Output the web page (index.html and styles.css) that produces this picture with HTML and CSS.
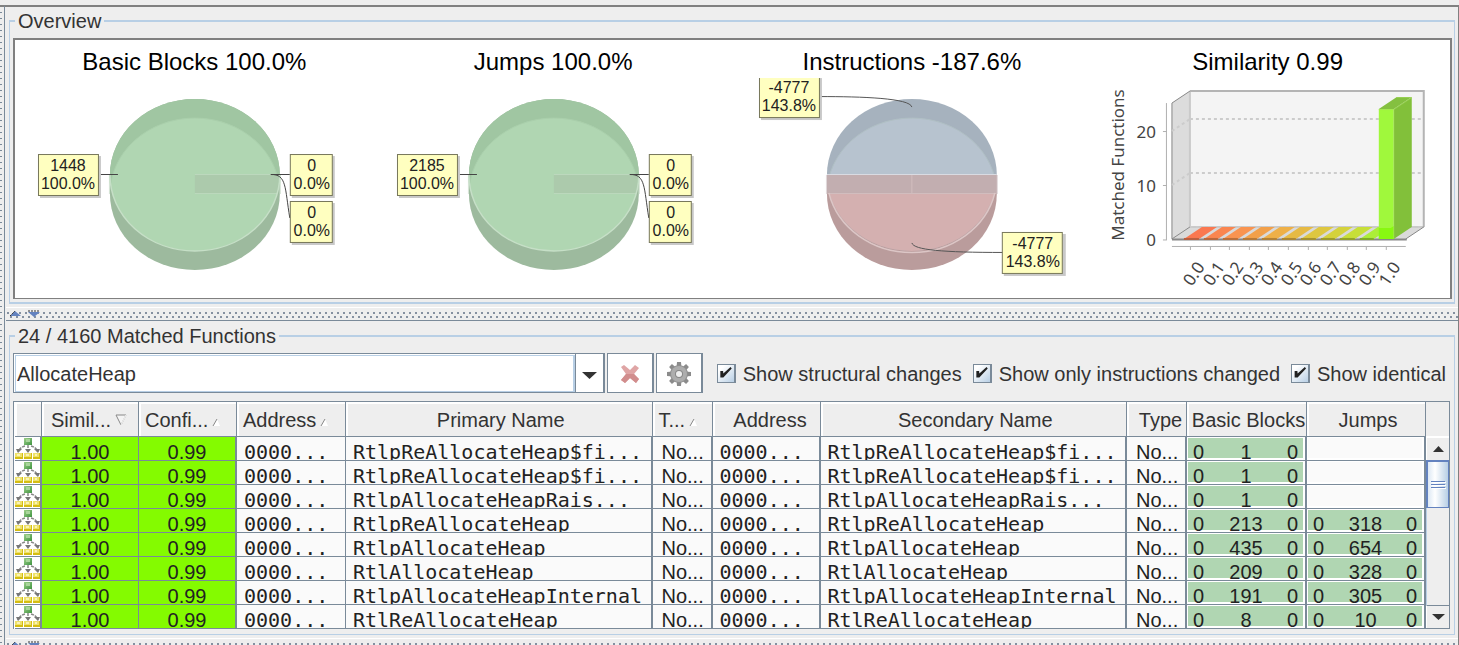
FILE: index.html
```html
<!DOCTYPE html>
<html lang="en">
<head>
<meta charset="utf-8">
<title>Matched Functions</title>
<link rel="stylesheet" href="styles.css">
</head>
<body>
<svg class="defs" aria-hidden="true">
  <defs>
    <clipPath id="top-face"><ellipse cx="180" cy="97" rx="85" ry="76"/></clipPath>
    <linearGradient id="leaf" x1="0" y1="0" x2="1" y2="1"><stop offset="0" stop-color="#9fd08c"/><stop offset="1" stop-color="#3f9440"/></linearGradient>
    <symbol id="green-pie" viewBox="0 0 359 220">
      <path d="M95 97A85 76 0 0 1 265 97V116A85 76 0 0 1 95 116Z" fill="#9dba9e"/>
      <ellipse cx="180" cy="97" rx="85" ry="76" fill="#a0c6a2"/>
      <g clip-path="url(#top-face)">
        <ellipse cx="180" cy="116" rx="85" ry="76" fill="#b0d6b2" stroke="#aacfac"/>
        <path d="M180 97H265V115H180Z" fill="#accaac"/>
        <path d="M180 96.500H265M180 115.500H263" stroke="#bcd8bd" fill="none"/>
      </g>
      <path d="M94.500 97V116M265.500 97V116" stroke="#d3e2d3" fill="none"/>
      <path d="M95 97A85 76 0 0 0 265 97" fill="none" stroke="#c6dfc7" stroke-width="1.500"/>
      <path d="M84 96.500H103M256 96.500H275M256 96.500C272 96 270 110 275 140" fill="none" stroke="#444"/>
    </symbol>
    <symbol id="graph" viewBox="0 0 26 23">
      <path d="M13 8V18M10 9Q5 10 3 15M16 9Q21 10 23 15" fill="none" stroke="#888" stroke-width="1.500" stroke-dasharray="3 1"/>
      <path d="M10 12H16L13 16ZM1 12H7L3 16ZM19 12H25L23 16Z" fill="#777"/>
      <rect x="9" y="1" width="8" height="7" fill="url(#leaf)"/>
      <path d="M11 2H15V5H11Z" fill="#a9d59b"/>
      <path d="M0 16H8V22H0ZM9 16H17V22H9ZM18 16H26V22H18Z" fill="#d5bd12"/>
      <path d="M0 16H7V20H0ZM9 16H16V20H9ZM18 16H24V20H18Z" fill="#eee16a"/>
      <path d="M2 17H5V19H2ZM11 17H14V19H11ZM20 17H22V19H20Z" fill="#faf3b4"/>
    </symbol>
    <symbol id="sort" viewBox="0 0 9 9"><path d="M1 8L5 1 8 8Z" fill="#fff"/><path d="M1 8L5 1" stroke="#888"/></symbol>
    <symbol id="collapse" viewBox="0 0 30 8"><path d="M0 6L5 1 11 6Z" fill="#6382bf"/><path d="M18 2H30L24 7Z" fill="#6382bf"/><path d="M0 6L5 1M18 1H30" stroke="#333" stroke-dasharray="2 1"/></symbol>
  </defs>
</svg>
<div class="app">
  <div class="rail"></div>
  <main class="main">
    <fieldset class="group">
      <legend>Overview</legend>
      <div class="charts">
        <figure class="chart">
          <figcaption>Basic Blocks 100.0%</figcaption>
          <svg viewBox="0 0 359 220" class="plot">
            <use href="#green-pie" width="359" height="220"/>
            <g class="shadow"><rect x="25" y="78" width="61" height="42"/><rect x="277" y="78" width="43" height="42"/><rect x="277" y="125" width="43" height="42"/></g>
            <g class="tag"><rect x="23.500" y="76.500" width="60" height="41"/><rect x="275.500" y="76.500" width="42" height="41"/><rect x="275.500" y="123.500" width="42" height="41"/></g>
            <g class="tagtext"><text x="53" y="93">1448</text><text x="53" y="111">100.0%</text><text x="297" y="93">0</text><text x="297" y="111">0.0%</text><text x="297" y="140">0</text><text x="297" y="158">0.0%</text></g>
          </svg>
        </figure>
        <figure class="chart">
          <figcaption>Jumps 100.0%</figcaption>
          <svg viewBox="0 0 359 220" class="plot">
            <use href="#green-pie" width="359" height="220"/>
            <g class="shadow"><rect x="25" y="78" width="61" height="42"/><rect x="277" y="78" width="43" height="42"/><rect x="277" y="125" width="43" height="42"/></g>
            <g class="tag"><rect x="23.500" y="76.500" width="60" height="41"/><rect x="275.500" y="76.500" width="42" height="41"/><rect x="275.500" y="123.500" width="42" height="41"/></g>
            <g class="tagtext"><text x="53" y="93">2185</text><text x="53" y="111">100.0%</text><text x="297" y="93">0</text><text x="297" y="111">0.0%</text><text x="297" y="140">0</text><text x="297" y="158">0.0%</text></g>
          </svg>
        </figure>
        <figure class="chart">
          <figcaption>Instructions -187.6%</figcaption>
          <svg viewBox="1 0 359 220" class="plot">
            <path d="M95 97H265V116A85 76 0 0 1 95 116Z" fill="#ba9c9c"/>
            <path d="M95 97A85 76 0 0 1 265 97Z" fill="#a6b2be"/>
            <g clip-path="url(#top-face)">
              <ellipse cx="180" cy="116" rx="85" ry="76" fill="#b7c3cf" stroke="#b0bfc4"/>
              <path d="M95 115H265V175H95Z" fill="#ba9c9c"/>
              <path d="M95 116A85 76 0 0 0 265 116Z" fill="#d4b0b0"/>
            </g>
            <path d="M95 97H265V116H95Z" fill="#c2aeb0"/>
            <path d="M95 96.500H265" stroke="#d9dbe2"/>
            <path d="M96 115.500H264M180 97V115" stroke="#d2bebf" fill="none"/>
            <path d="M94.500 97V116M265.500 97V116" stroke="#ded6d8" fill="none"/>
            <path d="M97 115A85 76 0 0 0 263 115" fill="none" stroke="#dcc6c6" stroke-width="1.500"/>
            <path d="M88 18.500C130 18.500 178 20 180 29M180 165C182 172 210 174.500 272 174.500" fill="none" stroke="#555"/>
            <g class="shadow"><rect x="29" y="0" width="61" height="42"/><rect x="272" y="156" width="62" height="42"/></g>
            <g class="tag"><rect x="27.500" y="-1.500" width="60" height="41"/><rect x="270.500" y="154.500" width="60" height="41"/></g>
            <g class="tagtext"><text x="57" y="15">-4777</text><text x="57" y="33">143.8%</text><text x="301" y="171">-4777</text><text x="301" y="189">143.8%</text></g>
          </svg>
        </figure>
        <figure class="chart">
          <figcaption>Similarity 0.99</figcaption>
          <svg viewBox="0 0 359 220" class="plot">
            <path d="M81 25L99 13V149L81 161Z" fill="#dcdcdc"/>
            <path d="M99 13H333V149H99Z" fill="#f4f4f4"/>
            <path d="M81 161L99 149H333L315 161Z" fill="#dadada"/>
            <path d="M99 13V149H333" fill="none" stroke="#cacaca" stroke-width="2"/>
            <path d="M99 13H333V149" fill="none" stroke="#b4b4b4" stroke-width="2"/>
            <path d="M81 161V25L99 13M81 161L99 149M315 161L333 149" fill="none" stroke="#888"/>
            <path d="M99 41H331M99 95H331M99 149H331M81 53L99 41M81 107L99 95" fill="none" stroke="#ccc" stroke-width="2" stroke-dasharray="3 3"/>
            <path d="M81 161.500H316" stroke="#888" stroke-width="2"/>
            <g>
              <path d="M93 161L111 149H126L108 161Z" fill="#fa7850"/><path d="M113 161L131 149H145L127 161Z" fill="#fa8650"/>
              <path d="M132 161L150 149H165L147 161Z" fill="#f99450"/><path d="M152 161L170 149H184L166 161Z" fill="#f2a04a"/>
              <path d="M171 161L189 149H204L186 161Z" fill="#eeb048"/><path d="M191 161L209 149H223L205 161Z" fill="#e6ba44"/>
              <path d="M210 161L228 149H243L225 161Z" fill="#dec740"/><path d="M230 161L248 149H262L244 161Z" fill="#d4d23c"/>
              <path d="M249 161L267 149H282L264 161Z" fill="#c7df38"/><path d="M269 161L287 149H301L283 161Z" fill="#acee38"/>
            </g>
            <g stroke-width="2">
              <path d="M93 161H108" stroke="#bb6040"/><path d="M113 161H127" stroke="#bb683c"/><path d="M132 161H147" stroke="#bb703a"/><path d="M152 161H166" stroke="#b87a38"/><path d="M171 161H186" stroke="#b48236"/><path d="M191 161H205" stroke="#ae8834"/><path d="M210 161H225" stroke="#a69230"/><path d="M230 161H244" stroke="#9e9c2c"/><path d="M249 161H264" stroke="#94a428"/><path d="M269 161H283" stroke="#80ac28"/>
            </g>
            <path d="M303 31L321 19V149L303 161Z" fill="#82c03a"/>
            <path d="M288 31L306 19H321L303 31Z" fill="#84c040"/>
            <path d="M288 31H303V161H288Z" fill="#a0f83c"/>
            <path d="M288 150H300L303 148V161H288Z" fill="#88f810"/>
            <path d="M288 31.500H303L321 19.500H306M303 31V160" fill="none" stroke="#a6dc62" stroke-width=".6"/>
            <path d="M75.500 25V162M72 53.500H76M72 107.500H76M72 162H76M81 168.500H315M99.500 169V172M119.500 169V172M138.500 169V172M158.500 169V172M177.500 169V172M197.500 169V172M217.500 169V172M236.500 169V172M256.500 169V172M275.500 169V172M295.500 169V172" fill="none" stroke="#b0b0b0"/>
            <g class="axis" text-anchor="end"><text x="65" y="60">20</text><text x="65" y="114">10</text><text x="65" y="168">0</text></g>
            <text class="axis" text-anchor="middle" transform="translate(33 87) rotate(-90)">Matched Functions</text>
            <g class="axis">
              <text transform="translate(101 209) rotate(-56)">0.0</text><text transform="translate(121 209) rotate(-56)">0.1</text><text transform="translate(140 209) rotate(-56)">0.2</text><text transform="translate(160 209) rotate(-56)">0.3</text><text transform="translate(179 209) rotate(-56)">0.4</text><text transform="translate(199 209) rotate(-56)">0.5</text><text transform="translate(218 209) rotate(-56)">0.6</text><text transform="translate(238 209) rotate(-56)">0.7</text><text transform="translate(257 209) rotate(-56)">0.8</text><text transform="translate(277 209) rotate(-56)">0.9</text><text transform="translate(297 209) rotate(-56)">1.0</text>
            </g>
          </svg>
        </figure>
      </div>
    </fieldset>
    <div class="splitter"><svg width="30" height="8"><use href="#collapse" width="30" height="8"/></svg></div>
    <fieldset class="group functions">
      <legend>24 / 4160 Matched Functions</legend>
      <div class="toolbar">
        <div class="combo">
          <input type="text" class="query" value="AllocateHeap" aria-label="Filter">
          <button type="button" class="drop" aria-label="Show history"><svg width="15" height="8" viewBox="0 0 15 8"><path d="M0 0H15L7.500 7Z" fill="#333"/></svg></button>
        </div>
        <button type="button" class="tool" aria-label="Clear"><svg width="20" height="20" viewBox="0 0 20 20"><path d="M1 3L4 1 10 6 15 1 19 4 14 10 19 15 16 19 10 14 5 19 1 16 6 10Z" fill="#dfa5a5"/><path d="M6 10L14 10 19 15 16 19 10 14 5 19 1 16Z" fill="#d18d8d"/></svg></button>
        <button type="button" class="tool" aria-label="Settings"><svg width="26" height="26" viewBox="-13 -13 26 26"><g fill="#8b8b8b"><path d="M-2 -12H2L3 0 2 12H-2L-3 0Z"/><path d="M-2 -12H2L3 0 2 12H-2L-3 0Z" transform="rotate(45)"/><path d="M-2 -12H2L3 0 2 12H-2L-3 0Z" transform="rotate(90)"/><path d="M-2 -12H2L3 0 2 12H-2L-3 0Z" transform="rotate(135)"/></g><circle r="9" fill="#8f8f8f"/><circle r="8" fill="#adadad"/><circle r="4" fill="#888"/><circle r="3" fill="#eee"/></svg></button>
        <label class="check"><input type="checkbox" checked> Show structural changes</label>
        <label class="check"><input type="checkbox" checked> Show only instructions changed</label>
        <label class="check"><input type="checkbox" checked> Show identical</label>
      </div>
      <div class="grid">
        <table class="table">
          <colgroup><col class="w-icon"><col class="w-sim"><col class="w-conf"><col class="w-addr"><col><col class="w-type"><col class="w-addr2"><col><col class="w-type"><col class="w-bb"><col class="w-jumps"></colgroup>
          <thead><tr>
            <th></th>
            <th class="near wide">Simil... <svg width="12" height="13" viewBox="0 0 12 13"><path d="M1 1H11L6 11Z" fill="#f4f4f4" stroke="#888"/><path d="M11 1L6 11" stroke="#fff"/></svg></th>
            <th class="near">Confi... <svg width="9" height="9"><use href="#sort" width="9" height="9"/></svg></th>
            <th class="near">Address <svg width="9" height="9"><use href="#sort" width="9" height="9"/></svg></th>
            <th>Primary Name</th>
            <th class="near">T... <svg width="9" height="9"><use href="#sort" width="9" height="9"/></svg></th>
            <th class="shift">Address</th><th>Secondary Name</th><th class="shift">Type</th><th>Basic Blocks</th><th>Jumps</th>
          </tr></thead>
          <tbody id="rows"></tbody>
        </table>
        <div class="scroll">
          <div class="corner"></div>
          <button type="button" class="arrow" aria-label="Scroll up"><svg width="11" height="6" viewBox="0 0 11 6"><path d="M0 6L5.500 0 11 6Z" fill="#333"/></svg></button>
          <div class="thumb"><i></i><i></i><i></i></div>
          <div class="track"></div>
          <button type="button" class="arrow" aria-label="Scroll down"><svg width="13" height="7" viewBox="0 0 13 7"><path d="M0 0H13L6.500 6Z" fill="#333"/></svg></button>
        </div>
      </div>
    </fieldset>
    <div class="splitter"><svg width="30" height="8"><use href="#collapse" width="30" height="8"/></svg></div>
  </main>
</div>
<script src="rows.js"></script>
</body>
</html>
```
FILE: rows.js
```js
const rows = [
  ["RtlpReAllocateHeap$fi...", [0, 1, 0], null],
  ["RtlpReAllocateHeap$fi...", [0, 1, 0], null],
  ["RtlpAllocateHeapRais...", [0, 1, 0], null],
  ["RtlpReAllocateHeap", [0, 213, 0], [0, 318, 0]],
  ["RtlpAllocateHeap", [0, 435, 0], [0, 654, 0]],
  ["RtlAllocateHeap", [0, 209, 0], [0, 328, 0]],
  ["RtlpAllocateHeapInternal", [0, 191, 0], [0, 305, 0]],
  ["RtlReAllocateHeap", [0, 8, 0], [0, 10, 0]]
];
const counts = (c) => c
  ? `<td class="counts"><div class="cell">${c.map((n) => `<span>${n}</span>`).join("")}</div></td>`
  : `<td class="counts empty"><div class="cell"></div></td>`;
const cell = (text, kind) => `<td class="${kind}"><div class="cell">${text}</div></td>`;
document.getElementById("rows").innerHTML = rows.map(([name, blocks, jumps]) => `<tr>
  <td class="icon"><svg width="26" height="23"><use href="#graph" width="26" height="23"/></svg></td>
  ${cell("1.00", "score")}${cell("0.99", "score end")}${cell("0000...", "mono")}${cell(name, "mono name end")}${cell("No...", "kind end")}
  ${cell("0000...", "mono end")}${cell(name, "mono name end")}${cell("No...", "kind end")}${counts(blocks)}${counts(jumps)}
</tr>`).join("");
```
FILE: styles.css
```css
* { box-sizing: border-box; }
body {
  margin: 0;
  height: 100vh;
  overflow: hidden;
  background: #eee;
  color: #333;
  font: 20px/24px "Liberation Sans", Arial, sans-serif;
}
button, input { font: inherit; color: inherit; margin: 0; }
.defs { position: absolute; width: 0; height: 0; }
.app {
  display: flex;
  height: 100%;
  padding-top: 5px;
}
.rail {
  flex: none;
  width: 5px;
  border-top: 2px solid #808080;
  border-right: 1px solid #7a8a99;
  background: repeating-linear-gradient(#eee 0 5px, #7a8a99 5px 6px) left / 2px 100% no-repeat;
}
.main {
  flex: 1;
  min-width: 0;
  padding: 2px 0 0 1px;
  border-top: 2px solid #808080;
  border-right: 1px solid #808080;
}
.group {
  min-width: 0;
  margin: 0 3px;
  padding: 5px 2px 3px 3px;
  border: 1px solid #b8cfe5;
  border-width: 2px 1px;
}
.group legend { margin-left: 2px; padding: 0 3px; }
.functions { margin-top: 3px; padding: 5px 4px 5px 3px; border-bottom-width: 1px; }
.charts {
  display: grid;
  grid-template-columns: repeat(4, 1fr);
  background: #fff;
  border: 2px solid #808080;
  border-bottom-width: 1px;
}
.chart { margin: 0; min-width: 0; }
.chart figcaption {
  height: 38px;
  padding-top: 6px;
  color: #000;
  font-size: 24px;
  line-height: 32px;
  text-align: center;
  white-space: nowrap;
}
.chart:last-child figcaption { padding-right: 6px; }
.plot { display: block; width: 100%; height: 220px; overflow: hidden; }
.shadow rect { fill: #c8c8c8; }
.tag rect { fill: #ffffc0; stroke: #77775a; }
.tagtext { font-size: 16px; fill: #222; text-anchor: middle; }
.axis { font-family: "Noto Sans", sans-serif; font-size: 17px; fill: #444; }
.splitter {
  height: 14px;
  margin-top: 3px;
  padding: 2px 0 0 4px;
  border-top: 1px solid #fff;
  border-bottom: 1px solid #7a8a99;
  line-height: 0;
  background:
    radial-gradient(circle at 1px 1px, #8490a0 1px, transparent 1px) 1px 4px / 6px 20px repeat-x,
    radial-gradient(circle at 1px 1px, #8490a0 1px, transparent 1px) 4px 8px / 6px 20px repeat-x;
}
.toolbar { display: flex; height: 40px; }
.combo {
  display: flex;
  flex: 1;
  min-width: 0;
  border: 1px solid #7a8a99;
  border-right-width: 2px;
  background: #fff;
}
.query {
  flex: 1;
  min-width: 0;
  margin: 1px 0 0 1px;
  padding: 1px 1px 0;
  border: 1px solid #b8cfe5;
  border-right-width: 2px;
  background: #fff;
}
.drop {
  width: 28px;
  padding: 0;
  border: 0;
  border-left: 1px solid #7a8a99;
  background: #fff;
}
.tool {
  display: grid;
  place-items: center;
  width: 47px;
  margin-left: 2px;
  padding: 2px 0 0;
  border: 1px solid #7a8a99;
  border-width: 1px 2px 1px 1px;
  background: #fff;
}
.check {
  display: flex;
  align-items: center;
  gap: 7px;
  margin-left: 11px;
  padding-top: 2px;
  white-space: nowrap;
}
.tool + .check { margin-left: 14px; }
.check:last-child { margin-right: 4px; }
.check input {
  appearance: none;
  width: 19px;
  height: 19px;
  margin-bottom: 2px;
  border: 1px solid #7a8a99;
  border-right-width: 2px;
  background: linear-gradient(135deg, #fff 20%, #b8cfe5);
}
.check input:checked::before {
  content: "";
  display: block;
  width: 12px;
  height: 12px;
  margin: 2px;
  background: #222;
  clip-path: polygon(5% 38%, 28% 38%, 30% 58%, 90% 5%, 100% 16%, 30% 92%, 5% 92%);
}
.grid {
  display: flex;
  margin-top: 8px;
  padding-left: 1px;
  background: #fff;
  border: 1px solid #7a8a99;
  border-bottom: 0;
}
.table {
  flex: 1;
  width: 100%;
  min-width: 0;
  table-layout: fixed;
  border-spacing: 0;
}
.w-icon { width: 27px; }
.w-sim { width: 97px; }
.w-conf { width: 98px; }
.w-addr { width: 109px; }
.w-type { width: 60px; }
.w-addr2 { width: 108px; }
.w-bb { width: 120px; }
.w-jumps { width: 119px; }
th {
  height: 35px;
  padding: 1px 0 0 4px;
  background: #eee;
  border: 0 solid #7a8a99;
  border-width: 0 1px 1px 0;
  box-shadow: inset 2px 2px #fff;
  font-weight: normal;
  white-space: nowrap;
}
th.near { padding-left: 6px; text-align: left; }
th.wide { padding-left: 9px; }
th.shift { padding-left: 8px; }
th svg { margin-left: -2px; }
td { padding: 0; background: #fafafa; border: 0 solid #7a8a99; border-width: 0 1px 1px 0; }
.cell {
  height: 23px;
  line-height: 30px;
  white-space: nowrap;
  color: #222;
}
.name .cell { overflow: hidden; }
.icon { background: #fff; border-right-width: 2px; line-height: 0; overflow: hidden; }
.end, .counts { border-right-width: 2px; }
.score { background: #84fb00; text-align: center; }
.mono { padding-left: 7px; font-family: "DejaVu Sans Mono", monospace; }
.kind { padding-left: 9px; }
.counts .cell {
  display: grid;
  grid-template-columns: 1fr 2fr 1fr;
  background: #b0d6b2;
  box-shadow: inset 1px 1px #fff, inset -2px -2px #fff;
}
.counts .cell span { text-align: center; }
.counts .cell span:first-child { text-align: left; padding-left: 6px; }
.counts .cell span:last-child { text-align: right; padding-right: 7px; }
.empty .cell { background: #fafafa; }
.scroll {
  display: flex;
  flex: none;
  flex-direction: column;
  width: 23px;
  background: #eee;
  border-bottom: 1px solid #7a8a99;
}
.corner { height: 35px; border-bottom: 1px solid #fff; }
.arrow {
  display: grid;
  place-items: center;
  height: 23px;
  padding: 0;
  background: #eee;
  border: 1px solid #fff;
  border-width: 1px 0 0 1px;
}
.thumb {
  display: flex;
  flex-direction: column;
  align-items: center;
  justify-content: center;
  gap: 2px;
  height: 48px;
  border: 1px solid #6382bf;
  border-width: 2px 1px 1px 2px;
  background: linear-gradient(90deg, #dce8f4, #fff 35%, #b8cfe5);
}
.thumb i { width: 14px; height: 1px; background: #6382bf; box-shadow: 1px 1px #fff; }
.track { flex: 1; border: 1px solid #b8cfe5; border-width: 0 0 0 1px; }
.scroll .arrow:last-child { border-top: 1px solid #7a8a99; }
```
